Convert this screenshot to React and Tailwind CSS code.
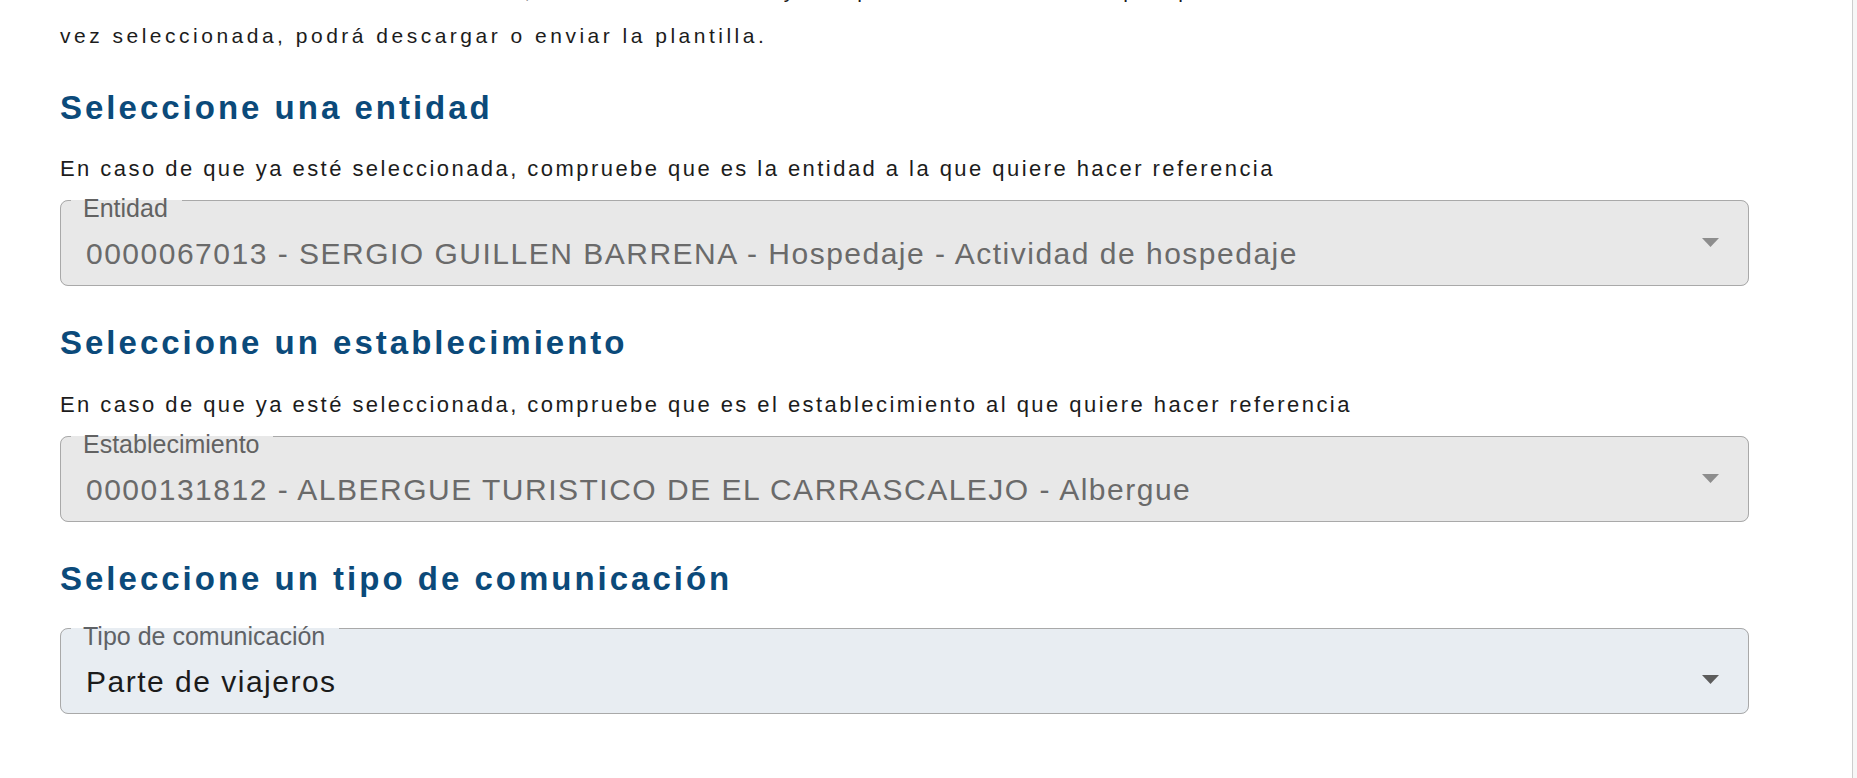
const SelectBox = ({ label, value, active, arrowTop }) => {
  return (
    <div className="relative h-[86px] w-[1689px]">
      <fieldset
        className={`absolute inset-0 m-0 rounded-[8px] border border-[#a9a9a9] px-[10px] py-0 ${
          active ? 'bg-[#e8edf2]' : 'bg-[#e8e8e8]'
        }`}
      >
        <legend className="invisible h-[1px] px-[13px] text-[25px] leading-[1px]">{label}</legend>
      </fieldset>

      <div className="relative pl-[23px]">
        <div className={`text-[25px] leading-[17px] ${active ? 'text-[#5f6266]' : 'text-[#626262]'}`}>{label}</div>
        <div
          className={`mt-[19px] pl-[3px] text-[30px] leading-[36px] tracking-[1.5px] whitespace-nowrap ${
            active ? 'text-[#1b1b1b]' : 'text-[#6a6a6a]'
          }`}
        >
          {value}
        </div>
      </div>

      {/* flecha del desplegable */}
      <svg
        className={`absolute right-[30px] ${arrowTop}`}
        width="17"
        height="9"
        viewBox="0 0 17 9"
      >
        <polygon points="0,0 17,0 8.5,9" fill={active ? '#5c5c5c' : '#8d8d8d'} />
      </svg>
    </div>
  );
};

const App = () => {
  return (
    <div className="flex h-[778px] overflow-hidden bg-white font-['Liberation_Sans',Arial,sans-serif]">
      <div className="flex-1 pl-[60px]">
        {/* Texto introductorio */}
        <p className="-mt-[32px] text-[21px] leading-[45px] tracking-[3.5px] text-[#1c1c1c] whitespace-nowrap">
          A continuación seleccione la entidad, el establecimiento y el tipo de comunicación que quiere. Una
          <br />
          vez seleccionada, podrá descargar o enviar la plantilla.
        </p>

        {/* Entidad */}
        <h2 className="mt-[30px] text-[33px] leading-[40px] font-bold tracking-[3px] text-[#0b4a7a]">
          Seleccione una entidad
        </h2>
        <p className="mt-[26px] text-[22px] leading-[30px] tracking-[2.45px] text-[#1c1c1c]">
          En caso de que ya esté seleccionada, compruebe que es la entidad a la que quiere hacer referencia
        </p>
        <div className="mt-[16px]">
          <SelectBox
            label="Entidad"
            value="0000067013 - SERGIO GUILLEN BARRENA - Hospedaje - Actividad de hospedaje"
            arrowTop="top-[38px]"
          />
        </div>

        {/* Establecimiento */}
        <h2 className="mt-[37px] text-[33px] leading-[40px] font-bold tracking-[3px] text-[#0b4a7a]">
          Seleccione un establecimiento
        </h2>
        <p className="mt-[27px] text-[22px] leading-[30px] tracking-[2.45px] text-[#1c1c1c]">
          En caso de que ya esté seleccionada, compruebe que es el establecimiento al que quiere hacer referencia
        </p>
        <div className="mt-[16px]">
          <SelectBox
            label="Establecimiento"
            value="0000131812 - ALBERGUE TURISTICO DE EL CARRASCALEJO - Albergue"
            arrowTop="top-[38px]"
          />
        </div>

        {/* Tipo de comunicación */}
        <h2 className="mt-[37px] text-[33px] leading-[40px] font-bold tracking-[3px] text-[#0b4a7a]">
          Seleccione un tipo de comunicación
        </h2>
        <div className="mt-[29px]">
          <SelectBox label="Tipo de comunicación" value="Parte de viajeros" active arrowTop="top-[47px]" />
        </div>
      </div>

      {/* barra de desplazamiento */}
      <div className="w-[5px] border-l border-[#cdcdcd] bg-[#f7f7f7]" />
    </div>
  );
};

export default App;
